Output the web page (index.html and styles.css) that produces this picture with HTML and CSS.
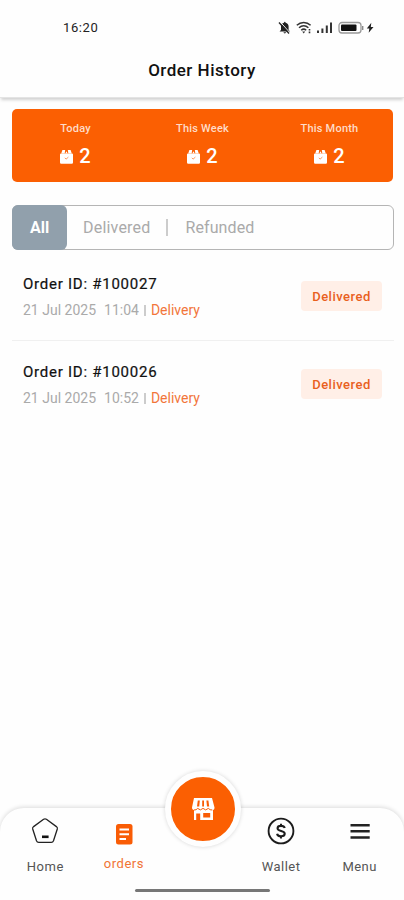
FILE: index.html
```html
<!DOCTYPE html>
<html lang="en">
<head>
<meta charset="utf-8">
<title>Order History</title>
<link rel="stylesheet" href="styles.css">
</head>
<body>
<svg class="defs" width="0" height="0">
  <symbol id="bag" viewBox="0 0 13 15">
    <path fill="#fff" d="M1 4.600h11a1 1 0 0 1 1 1v7.900a1.200 1.200 0 0 1-1.200 1.200H1.200A1.200 1.200 0 0 1 0 13.500V5.600a1 1 0 0 1 1-1zM1.300 4.200L2.400 1h2.800l-.5 3.200zM5.400 4.200L6.500 2.200l1.100 2zM8.300 4.200L7.800 1h2.800l1.100 3.200z"/>
    <path fill="none" stroke="#fb8a4c" stroke-width=".9" d="M4.800 8.900l1.300 1.200 2.300-2"/>
  </symbol>
</svg>
<div class="phone">
  <div class="status">
    <span class="clock">16:20</span>
    <svg class="status-icons" width="100" height="16" viewBox="0 0 100 16">
      <path fill="#222" d="M2.500 11.500l1.500-1.600V6.500C4 4.300 5.300 3.100 7 2.700c0-1.200 1.600-1.200 1.600 0 1.700.4 3 1.600 3 3.800v3.400l1.500 1.600zM6.500 12.300h2.600c-.2 1.500-2.400 1.500-2.600 0z"/>
      <path stroke="#fff" stroke-width="1" d="M3.200 2l10 11"/>
      <path stroke="#222" stroke-width="1.300" d="M2 2.500l10 11"/>
      <g fill="none" stroke="#333" stroke-width="1.500">
        <path d="M19.800 5.200c4-3.700 9.800-3.700 13.800 0M22 7.700c2.800-2.500 6.600-2.500 9.400 0M24.200 10.200c1.600-1.400 3.400-1.400 5 0"/>
      </g>
      <path fill="#333" d="M25.200 11.400h3l-1.500 2zM31.700 9h1.600v1.600h-1.600zM31.700 11.600h1.600v1.600h-1.600z"/>
      <path stroke="#333" stroke-width="2" d="M41 13v-2.500M45.400 13V8.500M49.800 13V5.500M54 13V2.500"/>
      <rect x="62" y="2.500" width="22" height="10.500" rx="3" fill="#fff" stroke="#999" stroke-width="1.300"/>
      <rect x="64" y="4.500" width="15.500" height="6.500" rx="1" fill="#111"/>
      <path stroke="#888" stroke-width="1.400" d="M85.700 6v4"/>
      <path fill="#222" d="M94.300 2.800l-4.500 5.800h2.500l-.6 4.200 4.800-5.900h-2.700z"/>
    </svg>
  </div>
  <header class="header"><h1>Order History</h1></header>

  <section class="summary">
    <div class="stat"><span class="label">Today</span><span class="value"><svg width="13" height="15"><use href="#bag"/></svg>2</span></div>
    <div class="stat"><span class="label">This Week</span><span class="value"><svg width="13" height="15"><use href="#bag"/></svg>2</span></div>
    <div class="stat"><span class="label">This Month</span><span class="value"><svg width="13" height="15"><use href="#bag"/></svg>2</span></div>
  </section>

  <div class="tabs">
    <span class="tab active">All</span>
    <span class="tab delivered">Delivered</span>
    <i class="bar"></i>
    <span class="tab refunded">Refunded</span>
  </div>

  <main class="orders">
    <article class="order">
      <div>
        <h2>Order ID: #100027</h2>
        <p><span class="date">21 Jul 2025</span><span class="time">11:04</span><i></i><span class="kind">Delivery</span></p>
      </div>
      <span class="badge">Delivered</span>
    </article>
    <article class="order">
      <div>
        <h2>Order ID: #100026</h2>
        <p><span class="date">21 Jul 2025</span><span class="time">10:52</span><i></i><span class="kind">Delivery</span></p>
      </div>
      <span class="badge">Delivered</span>
    </article>
  </main>

  <nav class="nav">
    <a class="item">
      <svg width="28" height="28" viewBox="0 0 28 28"><path fill="none" stroke="#222" stroke-width="1.300" stroke-linejoin="round" d="M12.600 2.300q1.400-.9 2.800 0l10 7.300q1.300 1 .9 2.400l-3.800 11.700q-.6 1.600-2.200 1.600H7.700q-1.600 0-2.200-1.600L1.700 12q-.4-1.400.9-2.400z"/><path stroke="#111" stroke-width="2.600" d="M11 19.800h6.600"/></svg>
      <span>Home</span>
    </a>
    <a class="item current">
      <svg width="28" height="28" viewBox="0 0 28 28"><rect x="6" y="4" width="16.500" height="20.500" rx="2.500" fill="#f95c05"/><path stroke="#fff" stroke-width="2" d="M9.500 9.500h9.500M9.500 14.200h9.500M9.500 19h6.500"/></svg>
      <span>orders</span>
    </a>
    <span class="item"></span>
    <a class="item">
      <svg width="30" height="30" viewBox="0 0 30 30"><circle cx="15" cy="15" r="13.300" fill="none" stroke="#1c1c1c" stroke-width="2"/><path fill="none" stroke="#1c1c1c" stroke-width="2.200" d="M19 11.900c-.4-1.600-1.900-2.400-4-2.400-2.200 0-3.700 1-3.700 2.600 0 3.900 7.700 1.900 7.700 5.800 0 1.700-1.600 2.700-4 2.700-2.300 0-3.900-1-4.200-2.700M15 7.200v2.600M15 20.200v2.800"/></svg>
      <span>Wallet</span>
    </a>
    <a class="item">
      <svg width="28" height="28" viewBox="0 0 28 28"><path stroke="#222" stroke-width="2.600" d="M4.500 8.300h19.200M4.500 14.300h19.200M4.500 20.500h19.200"/></svg>
      <span>Menu</span>
    </a>
    <div class="fab">
      <svg width="26" height="24" viewBox="0 0 26 24">
        <path fill="#fff" d="M4 1h18l2.500 9.500c0 1.500-.6 2.200-1.500 2.500v10H4V13c-1.300-.3-2-1-2-2.500z"/>
        <path fill="#f95c05" d="M7.800 3.500h2L9.200 9.500H7zM12.200 3.500h1.800v6h-1.800zM16.400 3.500h2l.8 6h-2.200zM6.200 16.500h4V23h-4zM13.200 16h7v4.500h-7z"/>
        <path fill="none" stroke="#f95c05" stroke-width="1" d="M4 13q2.300.2 3.700-1.600 2.700 3 5.300 0 2.700 3 5.300 0 1.700 1.800 4 1.600"/>
      </svg>
    </div>
    <div class="home-bar"></div>
  </nav>
</div>
</body>
</html>
```
FILE: styles.css
```css
* { box-sizing: border-box; }
body { margin: 0; background: #fefefe; font-family: Roboto, "Liberation Sans", sans-serif; }
h1, h2, p { margin: 0; }
.defs { position: absolute; }
.phone { width: 404px; height: 900px; display: flex; flex-direction: column; overflow: hidden; }
.status { height: 55px; padding: 0 27px 0 63px; display: flex; justify-content: space-between; align-items: center; }
.clock { font-size: 13px; letter-spacing: .6px; color: #222; }
.header { height: 43px; display: flex; justify-content: center; padding-top: 4px; border-bottom: 1px solid #e4e4e4; box-shadow: 0 3px 3px -1px rgba(0, 0, 0, .18); }
h1 { font-size: 17px; line-height: 22px; font-weight: 500; letter-spacing: .5px; color: #111; }
.summary { margin: 11px 11px 0 12px; height: 73px; background: #fb5f02; border-radius: 5px; display: flex; }
.stat { flex: 1; display: flex; flex-direction: column; align-items: center; color: #fff; padding-top: 12px; }
.label { font-size: 11px; line-height: 16px; font-weight: 500; letter-spacing: .2px; color: #ffdcc8; }
.value { display: flex; align-items: center; gap: 6px; margin-top: 7px; font-size: 20px; line-height: 24px; font-weight: 500; }
.tabs { margin: 23px 10px 0 12px; height: 45px; border: 1px solid #b5b5b5; border-radius: 6px; display: flex; align-items: center; font-size: 16px; color: #aaa; }
.tab.active { width: 55px; height: 45px; margin: -1px 0 -1px -1px; background: #91a0ac; border-radius: 6px; color: #fff; font-weight: 700; display: flex; align-items: center; justify-content: center; }
.delivered { margin-left: 16px; letter-spacing: .2px; }
.bar { width: 2px; height: 17px; background: #ccc; margin: 0 17px 0 16px; }
.refunded { letter-spacing: .1px; }
.orders { flex: 1; padding: 0 10px 0 12px; }
.order { height: 90px; padding: 23px 12px 0 11px; display: flex; justify-content: space-between; }
.order + .order { border-top: 1px solid #f0f0f0; padding-top: 20px; }
h2 { margin-top: 1px; font-size: 15px; line-height: 20px; font-weight: 400; letter-spacing: .75px; color: #111; -webkit-text-stroke: .2px #111; }
p { display: flex; align-items: center; margin-top: 7px; font-size: 14px; line-height: 18px; color: #aaa; }
.time { margin-left: 8px; }
p i { width: 2px; height: 11px; background: #ccc; margin: 0 5px 0 5px; }
.kind { color: #f2753a; }
.badge { width: 81px; height: 30px; margin-top: 8px; border-radius: 4px; background: #ffefe7; color: #e9601d; font-size: 13px; line-height: 31px; font-weight: 500; letter-spacing: .5px; text-align: center; }
.nav { position: relative; height: 92px; border-radius: 24px 24px 0 0; background: #fefefe; box-shadow: 0 -1px 4px rgba(0, 0, 0, .14); display: flex; padding: 0 5px 0 6px; }
.item { flex: 1; display: flex; flex-direction: column; align-items: center; padding-top: 9px; font-size: 13px; color: #555; }
.item svg { height: 28px; overflow: visible; }
.item span { margin-top: 14px; line-height: 16px; letter-spacing: .5px; }
.item.current { padding-top: 12px; color: #f17434; }
.item.current span { margin-top: 8px; }
.fab { position: absolute; left: 165px; top: -37px; width: 76px; height: 76px; border: 6px solid #fefefe; border-radius: 50%; background: #fb5f02; box-shadow: 0 0 4px rgba(0, 0, 0, .16); display: flex; align-items: center; justify-content: center; }
.home-bar { position: absolute; left: 135px; bottom: 8px; width: 135px; height: 3px; border-radius: 2px; background: #777; }
```
